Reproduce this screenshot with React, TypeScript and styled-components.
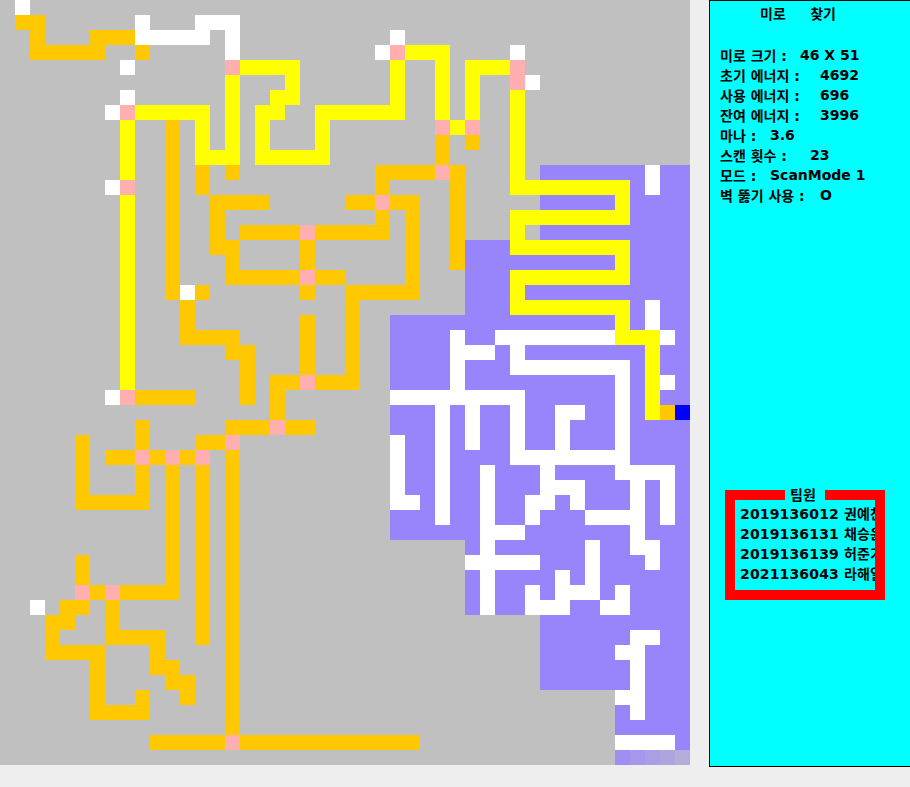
import React from 'react';
import styled, {createGlobalStyle} from 'styled-components';

const CELL_COLORS: Record<string, string> = {
    '.': '#c0c0c0',
    W: '#ffffff',
    Y: '#ffff00',
    O: '#ffc800',
    K: '#ffafaf',
    P: '#9985fb',
    B: '#0000ff',
    a: '#a08ff1',
    b: '#a697ea',
    c: '#aa9ee4',
    d: '#afa5de',
    e: '#b4add7',
};

const COLS = 46;

// one line per maze row: colour letter + column or column range
const MAZE_ROWS = [
    'W1',
    'O1-2 W9 W13-15',
    'O2 O6-8 W9-13 W15 W26',
    'O2-6 O9 W15 W25 K26 Y27-29 W34',
    'W8 K15 Y16-19 Y26 Y29 Y31-33 K34',
    'Y15 Y19 Y26 Y29 Y31 K34 W35',
    'W8 Y15 Y18-19 Y26 Y29 Y31 Y34',
    'W7 K8 Y9-13 Y15 Y17-18 Y21-26 Y29 Y31 Y34',
    'Y8 O11 Y13 Y15 Y17 Y21 K29 Y30 K31 Y34',
    'Y8 O11 Y13 Y15 Y17 Y21 O29 O31 Y34',
    'Y8 O11 Y13-15 Y17-21 O29 Y34',
    'Y8 O11 O13 O15 O25-28 K29 O30 Y34 P36-42 W43 P44-45',
    'W7 K8 O11 O13 O25 O30 Y34-41 P42 W43 P44-45',
    'Y8 O11 O14-17 O23-24 K25 O26-27 O30 P36-40 Y41 P42-45',
    'Y8 O11 O14 O25 O27 O30 Y34-41 P42-45',
    'Y8 O11 O14 O16-19 K20 O21-25 O27 O30 Y34 P36-45',
    'Y8 O11 O14-15 O20 O27 O30 P31-33 Y34-41 P42-45',
    'Y8 O11 O15 O20 O27 O30 P31-40 Y41 P42-45',
    'Y8 O11 O15-19 K20 O21-22 O27 P31-33 Y34-41 P42-45',
    'Y8 O11 W12 O13 O20 O23-27 P31-33 Y34 P35-45',
    'Y8 O12 O23 P31-33 Y34-41 P42 W43 P44-45',
    'Y8 O12 O20 O23 P26-40 Y41 P42 W43 P44-45',
    'Y8 O12-15 O20 O23 P26-29 W30 P31-32 W33-40 Y41-43 W44 P45',
    'Y8 O15-16 O20 O23 P26-29 W30-32 P33 W34 P35-42 Y43 P44-45',
    'Y8 O16 O20 O23 P26-29 W30 P31-33 W34-41 P42 Y43 P44-45',
    'Y8 O16 O18-19 K20 O21-23 P26-29 W30 P31-40 W41 P42 Y43 W44 P45',
    'W7 K8 O9-12 O16 O18 W26-34 P35-40 W41 P42 Y43 P44-45',
    'O18 P26-28 W29 P30 W31 P32-33 W34 P35-36 W37-38 P39-40 W41 P42 Y43 O44 B45',
    'O9 O15-17 K18 O19-20 P26-28 W29 P30 W31 P32-33 W34 P35-36 W37 P38-40 W41 P42-45',
    'O5 O9 O13-14 K15 W26 P27-28 W29 P30 W31 P32-33 W34 P35-36 W37 P38-40 W41 P42-45',
    'O5 O7-8 K9 O10 K11 O12 K13 O15 W26 P27-28 W29 P30-33 W34-41 P42-45',
    'O5 O9 O11 O13 O15 W26 P27-28 W29 P30-31 W32 P33-35 W36 P37-40 W41-44 P45',
    'O5 O9 O11 O13 O15 W26 P27-28 W29 P30-31 W32 P33-35 W36-38 P39-41 W42 P43 W44 P45',
    'O5-9 O11 O13 O15 W26-27 P28 W29 P30-31 W32 P33-34 W35-36 P37 W38 P39-41 W42 P43 W44 P45',
    'O11 O13 O15 P26-28 W29 P30-31 W32 P33-34 W35 P36-38 W39-42 P43 W44 P45',
    'O11 O13 O15 P26-31 W32-34 P35-41 W42 P43-45',
    'O11 O13 O15 P31 W32 P33-38 W39 P40-41 W42-43 P44-45',
    'O5 O11 O13 O15 W31-35 P36-38 W39 P40-42 W43 P44-45',
    'O5 O11 O13 O15 P31 W32 P33-36 W37 P38 W39 P40-45',
    'K5 O6 K7 O8-11 O13 O15 P31 W32 P33-34 W35 P36 W37-39 P40 W41 P42-45',
    'W2 O4-5 O7 O13 O15 P31 W32 P33-34 W35-37 P38-39 W40-41 P42-45',
    'O3-4 O7 O13 O15 P36-45',
    'O3 O7-10 O13 O15 P36-41 W42-43 P44-45',
    'O3-6 O10 O15 P36-40 W41-42 P43-45',
    'O6 O10-11 O15 P36-41 W42 P43-45',
    'O6 O11-12 O15 P36-41 W42 P43-45',
    'O6 O9 O12 O15 W41-42 P43-45',
    'O6-9 O15 P41 W42 P43-45',
    'O15 P41-45',
    'O10-14 K15 O16-27 W41-44 P45',
    'a41 b42 c43 d44 e45',
];

const expandRow = (row: string): string[] => {
    const cells = new Array<string>(COLS).fill('.');
    row.split(' ').forEach((seg) => {
        const [from, to] = seg.slice(1).split('-').map(Number);
        for (let c = from; c <= (to ?? from); c++) cells[c] = seg[0];
    });
    return cells;
};

const STATS = [
    {label: '미로 크기 :', value: '46 X 51', width: 80},
    {label: '초기 에너지 :', value: '4692', width: 100},
    {label: '사용 에너지 :', value: '696', width: 100},
    {label: '잔여 에너지 :', value: '3996', width: 100},
    {label: '마나 :', value: '3.6', width: 50},
    {label: '스캔 횟수 :', value: '23', width: 90},
    {label: '모드 :', value: 'ScanMode 1', width: 50},
    {label: '벽 뚫기 사용 :', value: 'O', width: 100},
];

const MEMBERS = [
    {id: '2019136012', name: '권예찬'},
    {id: '2019136131', name: '채승윤'},
    {id: '2019136139', name: '허준기'},
    {id: '2021136043', name: '라해일'},
];

const GlobalStyle = createGlobalStyle`
    html, body {
        margin: 0;
        padding: 0;
        background: #eeeeee;
    }
`;

const Frame = styled.div`
    width: 910px;
    height: 787px;
    display: flex;
    align-items: flex-start;
    gap: 19px;
    overflow: hidden;
    background: #eeeeee;
    color: #000;
    font-family: "DejaVu Sans", "Noto Sans CJK KR", sans-serif;
    font-weight: 700;
`;

const Maze = styled.div`
    flex: none;
    display: grid;
    grid-template-columns: repeat(46, 15px);
    grid-auto-rows: 15px;
`;

const Cell = styled.div<{ $kind: string }>`
    background: ${({$kind}) => CELL_COLORS[$kind]};
`;

const Panel = styled.aside`
    flex: none;
    box-sizing: border-box;
    width: 240px;
    height: 767px;
    border: 1px solid #000;
    background: #00ffff;
    padding: 3px 0 0 10px;
`;

const Title = styled.h1`
    margin: 0 0 21px 40px;
    font-size: 14px;
    font-weight: 700;
    line-height: 20px;
    white-space: pre;
`;

const Stats = styled.div`
    display: flex;
    flex-direction: column;
`;

const StatRow = styled.div`
    display: flex;
    height: 20px;
    align-items: center;
    font-size: 14px;
    white-space: nowrap;
`;

const StatLabel = styled.span<{ $width: number }>`
    flex: none;
    width: ${({$width}) => $width}px;
`;

const TeamBox = styled.section`
    position: relative;
    box-sizing: border-box;
    width: 160px;
    height: 110px;
    margin: 285px 0 0 5px;
    border: 10px solid #ff0000;
    padding: 4px 0 0 5px;
    overflow: visible;
`;

const TeamLegend = styled.h2`
    position: absolute;
    top: -10px;
    left: 50px;
    box-sizing: border-box;
    width: 40px;
    height: 10px;
    margin: 0;
    padding-right: 4px;
    background: #00ffff;
    font-size: 14px;
    font-weight: 700;
    line-height: 10px;
    text-align: center;
`;

const MemberList = styled.div`
    width: 135px;
    overflow: hidden;
`;

const Member = styled.div`
    height: 20px;
    line-height: 20px;
    font-size: 14px;
    letter-spacing: 0.15px;
    white-space: nowrap;
`;

const App: React.FC = () => {
    return (
        <>
            <GlobalStyle />
            <Frame>
                <Maze>
                    {MAZE_ROWS.map((row, r) =>
                        expandRow(row).map((kind, c) => <Cell key={`${r}-${c}`} $kind={kind} />)
                    )}
                </Maze>
                <Panel>
                    <Title>{'미로     찾기'}</Title>
                    <Stats>
                        {STATS.map((stat) => (
                            <StatRow key={stat.label}>
                                <StatLabel $width={stat.width}>{stat.label}</StatLabel>
                                <span>{stat.value}</span>
                            </StatRow>
                        ))}
                    </Stats>
                    <TeamBox>
                        <TeamLegend>팀원</TeamLegend>
                        <MemberList>
                            {MEMBERS.map((m) => (
                                <Member key={m.id}>{m.id} {m.name}</Member>
                            ))}
                        </MemberList>
                    </TeamBox>
                </Panel>
            </Frame>
        </>
    );
};

export default App;
